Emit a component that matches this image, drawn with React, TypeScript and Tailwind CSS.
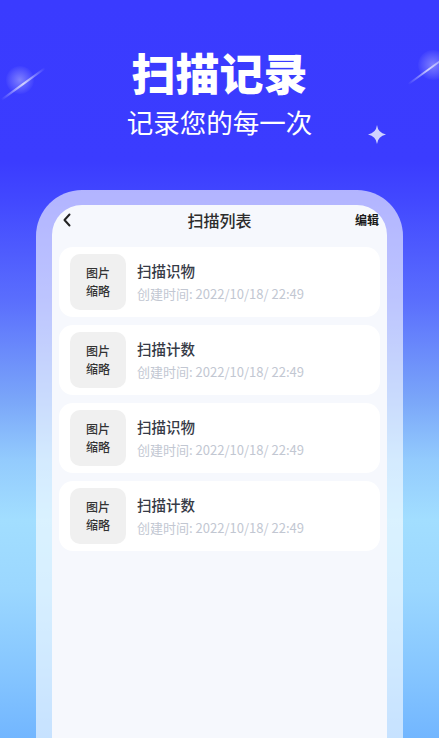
import React from "react";

const items = [
  { title: "扫描识物" },
  { title: "扫描计数" },
  { title: "扫描识物" },
  { title: "扫描计数" },
];

function Card({ title }: { title: string }) {
  return (
    <div className="flex h-[70px] items-center rounded-[14px] bg-white pl-[11px]">
      <div className="flex h-[56px] w-[56px] flex-col items-center justify-center rounded-[10px] bg-[#f0f0f0] text-[12px] font-medium leading-[18px] text-[#333333]">
        <span>图片</span>
        <span>缩略</span>
      </div>
      <div className="ml-[11px] flex flex-col">
        <span className="text-[14.5px] font-medium leading-[20px] text-[#363a46]">{title}</span>
        <span className="mt-[4px] text-[13px] leading-[18px] text-[#c2c7d2]">创建时间: 2022/10/18/ 22:49</span>
      </div>
    </div>
  );
}

export default function App() {
  return (
    <div
      className="relative h-[738px] w-[439px] overflow-hidden bg-[linear-gradient(180deg,#3a3bff_0px,#3b3cff_162px,#4248ff_200px,#5a6efd_300px,#7aa6f9_400px,#93cbfd_460px,#a2deff_520px,#9bd7ff_590px,#86c6ff_670px,#72b6ff_738px)]"
      style={{ fontFamily: '"Noto Sans CJK SC", "Noto Sans", sans-serif' }}
    >
      {/* decorations */}
      <div className="absolute left-[6px] top-[66px] h-[28px] w-[28px] rounded-full bg-[radial-gradient(circle,rgba(255,255,255,0.35)_0%,rgba(255,255,255,0.12)_50%,rgba(255,255,255,0)_75%)]" />
      <div className="absolute left-[-4px] top-[83px] h-[1.5px] w-[54px] -rotate-[36deg] bg-[linear-gradient(90deg,rgba(255,255,255,0)_0%,rgba(255,255,255,0.7)_50%,rgba(255,255,255,0)_100%)]" />
      <div className="absolute left-[418px] top-[50px] h-[30px] w-[30px] rounded-full bg-[radial-gradient(circle,rgba(255,255,255,0.35)_0%,rgba(255,255,255,0.12)_50%,rgba(255,255,255,0)_75%)]" />
      <div className="absolute left-[404px] top-[71px] h-[1.5px] w-[42px] -rotate-[36deg] bg-[linear-gradient(90deg,rgba(255,255,255,0)_0%,rgba(255,255,255,0.7)_60%,rgba(255,255,255,0.3)_100%)]" />
      <svg className="absolute left-[368px] top-[125px]" width="18" height="19" viewBox="0 0 18 19">
        <path d="M9 0 Q10 8 18 9.5 Q10 11 9 19 Q8 11 0 9.5 Q8 8 9 0 Z" fill="#cfd2ff" />
      </svg>

      {/* heading */}
      <div className="flex h-[190px] flex-col items-center pt-[48px] text-white">
        <div className="text-[44px] font-black leading-[48px] tracking-[0px]">扫描记录</div>
        <div className="mt-[10px] text-[26.5px] font-normal leading-[32px]">记录您的每一次</div>
      </div>

      {/* phone frame */}
      <div className="mx-[36px] h-[548px] rounded-t-[46px] bg-white/60 px-[16px] pt-[15px]">
        <div className="h-full rounded-t-[30px] bg-[#f6f8fd] px-[7px]">
          <div className="relative flex h-[30px] items-center justify-center">
            <svg className="absolute left-[3px] top-[8px]" width="10" height="14" viewBox="0 0 10 14">
              <path d="M7.5 1.5 L2.5 7 L7.5 12.5" fill="none" stroke="#222" strokeWidth="2" strokeLinecap="round" strokeLinejoin="round" />
            </svg>
            <span className="text-[16px] font-medium leading-[20px] text-[#2c2c2c]">扫描列表</span>
            <span className="absolute right-[1px] top-[6px] text-[12px] font-bold leading-[18px] text-[#1a1a1a]">编辑</span>
          </div>
          <div className="mt-[12px] flex flex-col gap-[8px]">
            {items.map((it, i) => (
              <Card key={i} title={it.title} />
            ))}
          </div>
        </div>
      </div>
    </div>
  );
}
